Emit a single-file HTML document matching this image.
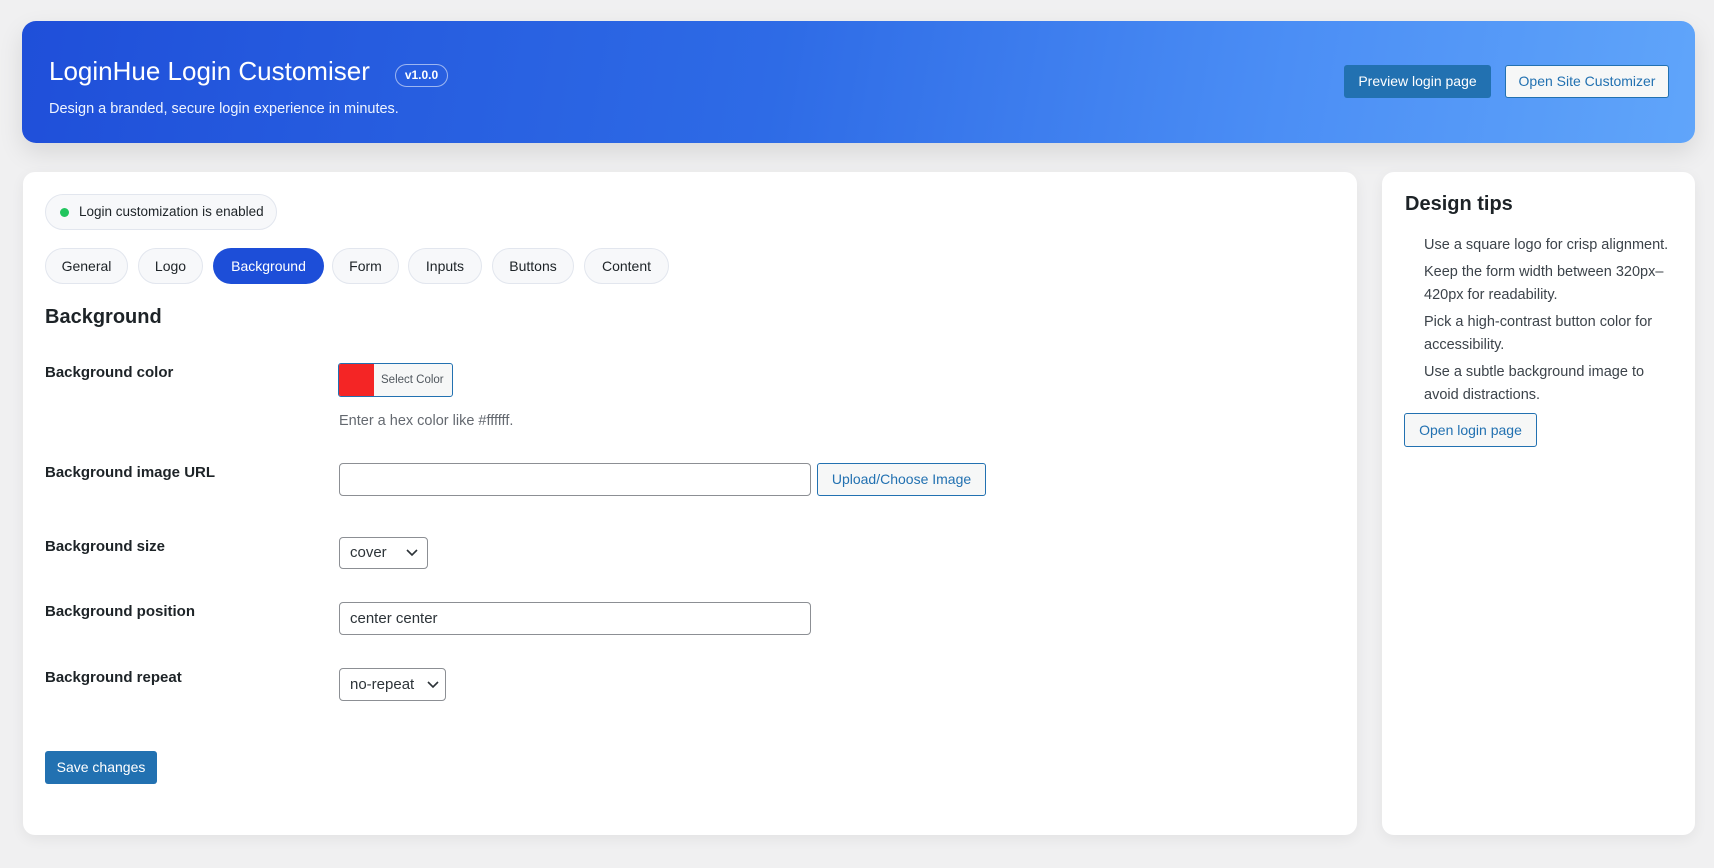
<!DOCTYPE html>
<html><head><meta charset="utf-8">
<style>
*{box-sizing:border-box;margin:0;padding:0}
body{width:1714px;height:868px;background:#f0f0f1;font-family:"Liberation Sans",sans-serif;color:#1d2327;position:relative;overflow:hidden}
.abs{position:absolute}
.header{left:22px;top:21px;width:1673px;height:122px;border-radius:14px;background:linear-gradient(100deg,#1f4fd9 0%,#2e6be6 45%,#4b8ef5 75%,#60a5fa 100%);box-shadow:0 10px 25px rgba(0,0,0,.1)}
.title{left:49px;top:56px;font-size:26px;color:#fff}
.ver{left:395px;top:64px;width:53px;height:23px;border:1px solid rgba(255,255,255,.55);border-radius:12px;color:#fff;font-size:12px;font-weight:bold;text-align:center;line-height:21px}
.sub{left:49px;top:101px;font-size:14.5px;color:#eef4ff}
.btn{font-size:14px;text-align:center;border-radius:3px}
.card{background:#fff;border-radius:12px;box-shadow:0 4px 14px rgba(0,0,0,.06)}
.pill{border:1px solid #e2e6ee;background:#f7f8fa;border-radius:18px;font-size:14px;text-align:center;color:#1d2327}
.lab{left:45px;font-size:15px;font-weight:bold;color:#1d2327}
.inp{border:1px solid #8c8f94;border-radius:4px;background:#fff;font-size:15px;color:#2c3338;padding-left:10px}
.tips li{list-style:none;font-size:14.5px;line-height:23px;color:#3c434a;margin-bottom:4px}
</style></head><body>
<div class="abs header"></div>
<div class="abs title">LoginHue Login Customiser</div>
<div class="abs ver">v1.0.0</div>
<div class="abs sub">Design a branded, secure login experience in minutes.</div>
<div class="abs btn" style="left:1344px;top:65px;width:147px;height:33px;background:#2271b1;color:#fff;line-height:33px">Preview login page</div>
<div class="abs btn" style="left:1505px;top:65px;width:164px;height:33px;background:#f6f7f7;border:1px solid #2271b1;color:#2271b1;line-height:31px">Open Site Customizer</div>

<div class="abs card" style="left:23px;top:172px;width:1334px;height:663px"></div>
<div class="abs card" style="left:1382px;top:172px;width:313px;height:663px"></div>

<div class="abs pill" style="left:45px;top:194px;width:232px;height:36px;line-height:34px;font-size:13.5px;text-align:left;padding-left:33px">Login customization is enabled</div>
<div class="abs" style="left:60px;top:208px;width:9px;height:9px;border-radius:50%;background:#22c55e"></div>

<div class="abs pill" style="left:45px;top:248px;width:83px;height:36px;line-height:34px">General</div>
<div class="abs pill" style="left:138px;top:248px;width:65px;height:36px;line-height:34px">Logo</div>
<div class="abs pill" style="left:213px;top:248px;width:111px;height:36px;line-height:36px;background:#1d4ed8;border:none;color:#fff">Background</div>
<div class="abs pill" style="left:332px;top:248px;width:67px;height:36px;line-height:34px">Form</div>
<div class="abs pill" style="left:408px;top:248px;width:74px;height:36px;line-height:34px">Inputs</div>
<div class="abs pill" style="left:492px;top:248px;width:82px;height:36px;line-height:34px">Buttons</div>
<div class="abs pill" style="left:584px;top:248px;width:85px;height:36px;line-height:34px">Content</div>

<div class="abs" style="left:45px;top:306px;font-size:20px;font-weight:bold">Background</div>

<div class="abs lab" style="top:364px">Background color</div>
<div class="abs lab" style="top:464px">Background image URL</div>
<div class="abs lab" style="top:538px">Background size</div>
<div class="abs lab" style="top:603px">Background position</div>
<div class="abs lab" style="top:669px">Background repeat</div>

<div class="abs" style="left:338px;top:363px;width:115px;height:34px;border:1px solid #2271b1;border-radius:3px;background:#f6f7f7;overflow:hidden">
 <div style="position:absolute;left:0;top:0;width:35px;height:100%;background:#f42525"></div>
 <div style="position:absolute;left:42px;top:0;line-height:32px;font-size:11.5px;color:#50575e">Select Color</div>
</div>
<div class="abs" style="left:339px;top:413px;font-size:14.5px;color:#646970">Enter a hex color like #ffffff.</div>

<div class="abs inp" style="left:339px;top:463px;width:472px;height:33px"></div>
<div class="abs btn" style="left:817px;top:463px;width:169px;height:33px;background:#f6f7f7;border:1px solid #2271b1;color:#2271b1;line-height:31px">Upload/Choose Image</div>

<div class="abs inp" style="left:339px;top:537px;width:89px;height:32px;line-height:30px">cover
<svg style="position:absolute;right:9px;top:11px" width="12" height="8" viewBox="0 0 12 8"><path d="M1 1l5 5 5-5" fill="none" stroke="#2c3338" stroke-width="1.6"/></svg></div>

<div class="abs inp" style="left:339px;top:602px;width:472px;height:33px;line-height:31px">center center</div>

<div class="abs inp" style="left:339px;top:668px;width:107px;height:33px;line-height:31px">no-repeat
<svg style="position:absolute;right:6px;top:12px" width="12" height="8" viewBox="0 0 12 8"><path d="M1 1l5 5 5-5" fill="none" stroke="#2c3338" stroke-width="1.6"/></svg></div>

<div class="abs btn" style="left:45px;top:751px;width:112px;height:33px;background:#2271b1;color:#fff;line-height:33px">Save changes</div>

<div class="abs" style="left:1405px;top:193px;font-size:20px;font-weight:bold">Design tips</div>
<ul class="abs tips" style="left:1424px;top:234px;width:250px">
<li>Use a square logo for crisp alignment.</li>
<li>Keep the form width between 320px–420px for readability.</li>
<li>Pick a high-contrast button color for accessibility.</li>
<li>Use a subtle background image to avoid distractions.</li>
</ul>
<div class="abs btn" style="left:1404px;top:413px;width:133px;height:34px;background:#f6f7f7;border:1px solid #2271b1;color:#2271b1;line-height:32px">Open login page</div>
</body></html>
